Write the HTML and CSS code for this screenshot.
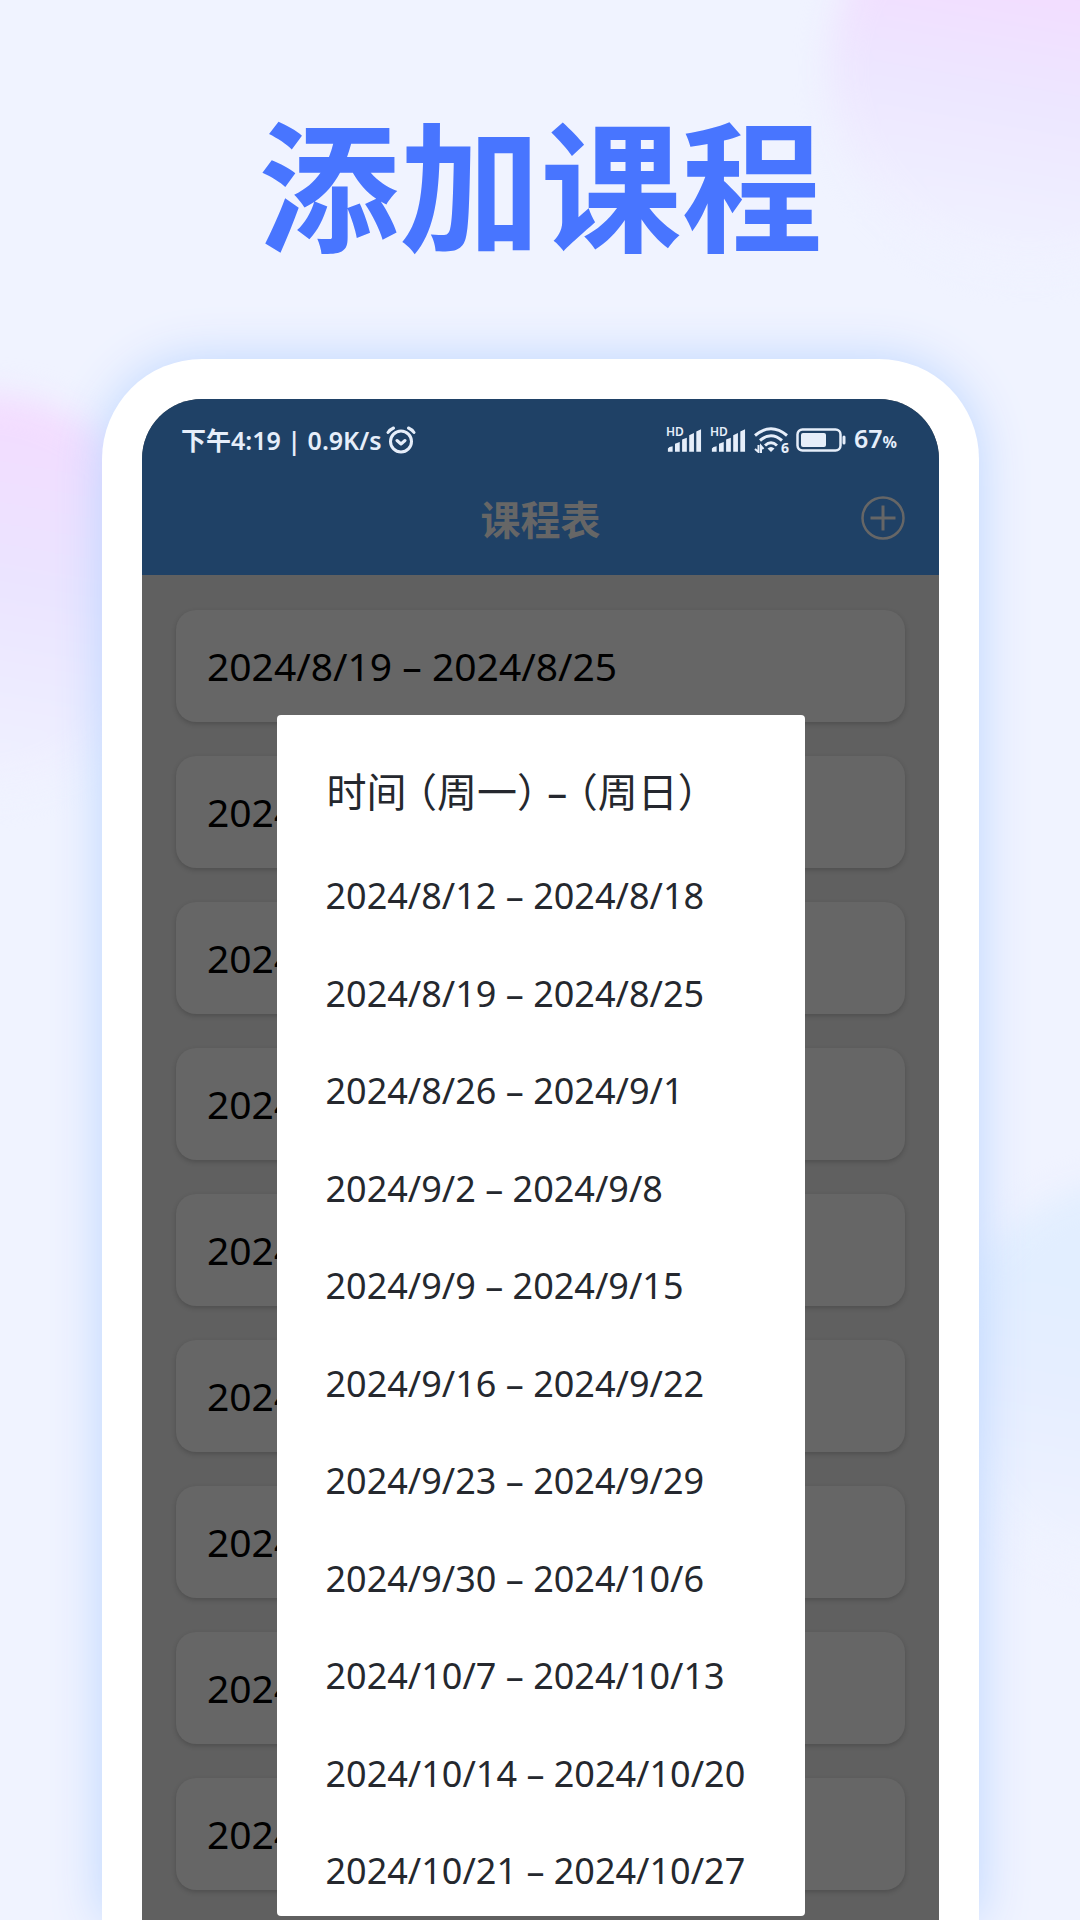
FILE: index.html
```html
<!DOCTYPE html>
<html lang="zh-CN">
<head>
<meta charset="utf-8">
<meta name="viewport" content="width=device-width, initial-scale=1">
<title>添加课程</title>
<link rel="stylesheet" href="styles.css">
</head>
<body>
<main class="stage">
  <div class="glow glow-top"></div>
  <div class="glow glow-left"></div>
  <div class="glow glow-right"></div>
  <h1 class="headline">添加课程</h1>
  <div class="phone">
    <div class="screen">
      <header class="top">
        <div class="status">
          <div class="status-group status-left">
            <span>下午4:19 | 0.9K/s</span>
            <svg class="alarm" viewBox="0 0 30 28" fill="none" stroke="currentColor" stroke-width="3" stroke-linecap="round" stroke-linejoin="round"><circle cx="15" cy="15.500" r="10.500"/><path d="M11 14.500l4 3.500 4-3.500M2 6.500Q4 3.500 7.500 2M28 6.500Q26 3.500 22.500 2"/></svg>
          </div>
          <div class="status-group status-right">
            <span class="signal"><span class="hd">HD</span><svg viewBox="0 0 38 26" fill="currentColor"><path d="M2 25v-3.500q1-2 5-2.500V25zM9.500 25v-8.500l5-2V25zM17 25V12l5-2v15zM24.500 25V7.500l5-2.500v20zM32 25V3.500L37 1v24z"/></svg></span>
            <span class="signal"><span class="hd">HD</span><svg viewBox="0 0 38 26" fill="currentColor"><path d="M2 25v-3.500q1-2 5-2.500V25zM9.500 25v-8.500l5-2V25zM17 25V12l5-2v15zM24.500 25V7.500l5-2.500v20zM32 25V3.500L37 1v24z"/></svg></span>
            <span class="wifi"><svg viewBox="0 0 34 26" fill="none" stroke="currentColor" stroke-width="3"><path d="M1 8.500Q17-5 33 8.500M6 13.500Q17 4 28 13.500M11 18.500Q17 13 23 18.500"/><path d="M13.500 21.500Q17 18.500 20.500 21.500L17 25z" fill="currentColor" stroke="none"/><path d="M4.500 18v7L1 22M7 26v-7l2.500 3" stroke-width="2"/></svg><span class="wifi-gen">6</span></span>
            <svg class="battery" viewBox="0 0 50 24" fill="none" stroke="currentColor"><rect x="1.500" y="1.500" width="43" height="21" rx="5" stroke-width="2.500"/><rect x="5" y="5" width="25" height="14" rx="2" fill="currentColor" stroke="none"/><path d="M48 9v6" stroke-width="3" stroke-linecap="round"/></svg>
            <span>67<span class="percent">%</span></span>
          </div>
        </div>
        <div class="bar">
          <h2 class="bar-title">课程表</h2>
          <button class="add" type="button" aria-label="添加"><svg viewBox="0 0 44 44" fill="none" stroke="currentColor" stroke-width="2.500"><circle cx="22" cy="22" r="20.500"/><path d="M22 9.500v25M9.500 22h25" stroke-width="3"/></svg></button>
        </div>
      </header>
      <div class="body">
        <ul class="weeks">
          <li class="week">2024/8/19 – 2024/8/25</li>
          <li class="week">2024</li>
          <li class="week">2024</li>
          <li class="week">2024</li>
          <li class="week">2024</li>
          <li class="week">2024</li>
          <li class="week">2024</li>
          <li class="week">2024</li>
          <li class="week">2024</li>
        </ul>
        <div class="overlay">
          <section class="picker" role="dialog" aria-labelledby="picker-title">
            <h3 class="picker-title" id="picker-title">时间 （周一） – （周日）</h3>
            <ul class="options">
              <li><button class="option" type="button">2024/8/12 – 2024/8/18</button></li>
              <li><button class="option" type="button">2024/8/19 – 2024/8/25</button></li>
              <li><button class="option" type="button">2024/8/26 – 2024/9/1</button></li>
              <li><button class="option" type="button">2024/9/2 – 2024/9/8</button></li>
              <li><button class="option" type="button">2024/9/9 – 2024/9/15</button></li>
              <li><button class="option" type="button">2024/9/16 – 2024/9/22</button></li>
              <li><button class="option" type="button">2024/9/23 – 2024/9/29</button></li>
              <li><button class="option" type="button">2024/9/30 – 2024/10/6</button></li>
              <li><button class="option" type="button">2024/10/7 – 2024/10/13</button></li>
              <li><button class="option" type="button">2024/10/14 – 2024/10/20</button></li>
              <li><button class="option" type="button">2024/10/21 – 2024/10/27</button></li>
            </ul>
          </section>
        </div>
      </div>
    </div>
  </div>
</main>
</body>
</html>
```
FILE: styles.css
```css
* { box-sizing: border-box; margin: 0; padding: 0; }

body {
  font-family: "Noto Sans", "Noto Sans CJK SC", sans-serif;
  background: #f0f3ff;
}

ul { list-style: none; }
svg { display: block; }
button { border: 0; background: none; font: inherit; color: inherit; cursor: pointer; }

.stage {
  position: relative;
  z-index: 0;
  display: flex;
  flex-direction: column;
  min-height: 100vh;
  padding: 76px 101px 0 102px;
  overflow: hidden;
  background: #f0f3ff;
}

/* Soft colour spots behind the phone */
.glow {
  position: absolute;
  z-index: -1;
  width: 400px;
  height: 400px;
  border-radius: 50%;
  filter: blur(16px);
}
.glow-top {
  top: -130px;
  right: -150px;
  background: linear-gradient(190deg, #f3dcff 30%, #ede6ff 55%, #f0f3ff 95%);
}
.glow-left {
  top: 394px;
  left: -220px;
  background: linear-gradient(190deg, #f3dcff 10%, #ebe4ff 45%, #f0f3ff 95%);
}
.glow-right {
  top: 1180px;
  right: -260px;
  background: linear-gradient(190deg, #e2eeff 30%, #e6eeff 55%, #f0f3ff 95%);
}

.headline {
  font-family: "Noto Sans CJK SC", sans-serif;
  font-size: 141px;
  line-height: 208px;
  font-weight: 700;
  text-align: center;
  color: #4875ff;
}

.phone {
  flex: 1;
  display: flex;
  margin-top: 75px;
  padding: 40px 40px 0;
  border-radius: 100px 100px 0 0;
  background: #fff;
  box-shadow: 0 0 50px #bcd6ff;
}

.screen {
  flex: 1;
  display: flex;
  flex-direction: column;
  border-radius: 60px 60px 0 0;
  overflow: hidden;
  background: #606060;
}

.top { background: #1f4166; }

.status {
  display: flex;
  justify-content: space-between;
  align-items: center;
  height: 64px;
  padding: 18px 42px 0 39px;
  font-size: 25px;
  line-height: 36px;
  font-weight: 600;
  color: #e6eefa;
}

.status-group { display: flex; align-items: center; }
.status-left { gap: 4px; }
.status-right { gap: 8px; }
.alarm { width: 30px; height: 28px; }

.signal { position: relative; }
.signal svg { width: 36px; height: 25px; }
.hd {
  position: absolute;
  top: -2px;
  left: 0;
  font-size: 12px;
  line-height: 12px;
}

.wifi { position: relative; }
.wifi svg { width: 34px; height: 26px; }
.wifi-gen {
  position: absolute;
  right: -1px;
  bottom: -3px;
  font-size: 14px;
  line-height: 16px;
  font-weight: 700;
}
.battery { width: 50px; height: 24px; }
.percent { font-size: 16px; font-weight: 700; }

.bar {
  display: grid;
  grid-template-columns: 1fr auto 1fr;
  align-items: center;
  height: 112px;
  padding: 0 34px 2px;
  color: #666;
}
.bar-title {
  grid-column: 2;
  font-family: "Noto Sans CJK SC", sans-serif;
  font-size: 40px;
  line-height: 60px;
  font-weight: 700;
}
.add { justify-self: end; width: 44px; height: 44px; }

.body { position: relative; flex: 1; }

.weeks {
  display: flex;
  flex-direction: column;
  gap: 34px;
  padding: 35px 34px 30px;
}
.week {
  padding: 28px 31px;
  border-radius: 20px;
  background: #666;
  box-shadow: 0 2px 5px #00000030;
  font-size: 39px;
  line-height: 56px;
  color: #000;
}

.overlay {
  position: absolute;
  inset: 0;
  display: flex;
  justify-content: center;
  padding: 140px 0 4px;
}

.picker {
  display: flex;
  flex-direction: column;
  width: 528px;
  border-radius: 4px;
  background: #fff;
  color: #25282e;
}
.picker-title {
  padding: 47px 50px 25px;
  font-size: 40px;
  line-height: 60px;
  font-weight: 400;
  font-feature-settings: "halt";
}
.options {
  flex: 1;
  display: flex;
  flex-direction: column;
  justify-content: space-between;
  padding: 25px 0 21px;
}
.option {
  display: block;
  width: 100%;
  padding: 0 49px;
  font-size: 36px;
  line-height: 48px;
  text-align: left;
}
```
